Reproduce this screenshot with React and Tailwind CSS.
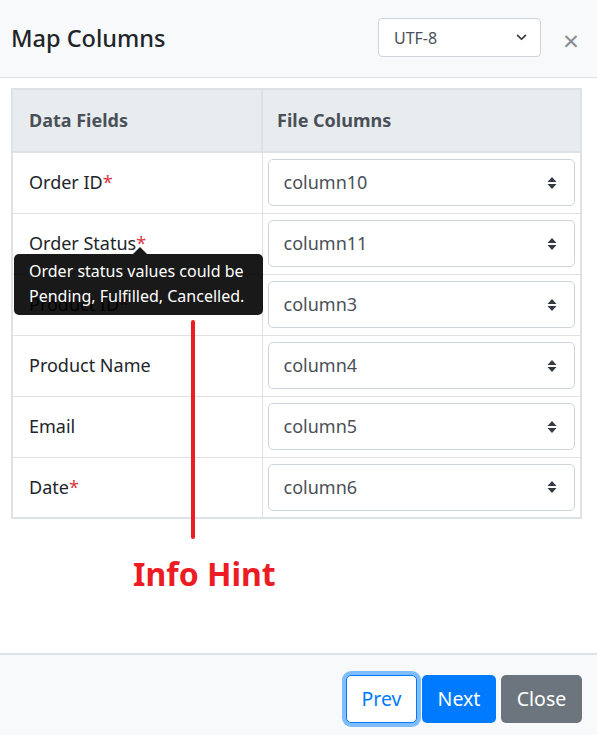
import React from "react";

const rows = [
  { label: "Order ID", required: true, value: "column10" },
  { label: "Order Status", required: true, value: "column11", hint: true },
  { label: "Product ID", required: true, value: "column3" },
  { label: "Product Name", required: false, value: "column4" },
  { label: "Email", required: false, value: "column5" },
  { label: "Date", required: true, value: "column6" },
];

function UpDown() {
  return (
    <svg width="10" height="14" viewBox="0 0 10 14" className="shrink-0">
      <path d="M5 1 L9.5 6 H0.5 Z" fill="#343a40" />
      <path d="M5 13 L9.5 8 H0.5 Z" fill="#343a40" />
    </svg>
  );
}

function Chevron() {
  return (
    <svg width="11" height="7" viewBox="0 0 12 8" className="shrink-0">
      <path d="M1.5 1.5 L6 6 L10.5 1.5" fill="none" stroke="#343a40" strokeWidth="2" strokeLinecap="round" strokeLinejoin="round" />
    </svg>
  );
}

export default function App() {
  return (
    <div className="w-[597px] h-[735px] flex flex-col bg-white text-[#212529] font-['Noto_Sans','Open_Sans',sans-serif] overflow-hidden">
      {/* HEADER */}
      <div className="h-[78px] shrink-0 flex items-center bg-[#f8f9fa] border-b border-[#dee2e6] pl-[11px] pr-[18px]">
        <h5 className="text-[23.5px] font-medium leading-none flex-1">Map Columns</h5>
        <div className="w-[163px] h-[39px] bg-white border border-[#ced4da] rounded-[4px] flex items-center justify-between pl-[15px] pr-[13px] mt-[-2px]">
          <span className="text-[16px] text-[#495057]">UTF-8</span>
          <Chevron />
        </div>
        <span className="ml-[22px] text-[28px] leading-none text-[#8a8e92] mt-[2px]">×</span>
      </div>

      {/* BODY */}
      <div className="flex-1 relative px-[11px] pt-[10px]">
        <table className="w-[571px] border-collapse border-2 border-[#dee2e6] table-fixed">
          <thead>
            <tr className="bg-[#e9ecef] h-[63px]">
              <th className="w-[250px] text-left font-bold text-[18px] text-[#495057] pl-[16px] border-2 border-[#dee2e6]">Data Fields</th>
              <th className="text-left font-bold text-[18px] text-[#495057] pl-[14px] border-2 border-[#dee2e6]">File Columns</th>
            </tr>
          </thead>
          <tbody>
            {rows.map((r) => (
              <tr key={r.label} className="h-[61px]">
                <td className="relative border border-[#dee2e6] pl-[16px] text-[18px]">
                  {r.label}
                  {r.required && <span className="text-[#dc3545]">*</span>}
                  {r.hint && (
                    <div className="absolute left-[1px] top-[40px] z-10 w-[249px] h-[61px] bg-black/90 rounded-[5px] text-white text-[16px] leading-[25px] flex flex-col justify-center pl-[15px]">
                      <div className="absolute top-[-7px] left-[119px] w-0 h-0 border-l-[7px] border-r-[7px] border-b-[7px] border-l-transparent border-r-transparent border-b-black/90" />
                      <span>Order status values could be</span>
                      <span>Pending, Fulfilled, Cancelled.</span>
                    </div>
                  )}
                </td>
                <td className="border border-[#dee2e6] px-[5px]">
                  <div className="h-[47px] border border-[#ced4da] rounded-[5px] flex items-center justify-between pl-[15px] pr-[17px] bg-white">
                    <span className="text-[18px] text-[#495057]">{r.value}</span>
                    <UpDown />
                  </div>
                </td>
              </tr>
            ))}
          </tbody>
        </table>

        {/* annotation */}
        <div className="absolute left-[191px] top-[242px] w-[4px] h-[219px] bg-[#ed1c24] rounded-full z-20" />
        <div className="absolute left-[133px] top-[480px] text-[32px] font-bold text-[#ed1c24] leading-none">Info Hint</div>
      </div>

      {/* FOOTER */}
      <div className="h-[82px] shrink-0 bg-[#f8f9fa] border-t-2 border-[#dee2e6] flex items-center justify-end gap-[5px] pr-[15px] pt-[8px]">
        <button className="h-[48px] w-[71px] rounded-[5px] bg-white border border-[#007bff] text-[#007bff] text-[19.5px] ring-4 ring-[#80bdff]">Prev</button>
        <button className="h-[48px] w-[74px] rounded-[5px] bg-[#007bff] text-white text-[19.5px]">Next</button>
        <button className="h-[48px] w-[81px] rounded-[5px] bg-[#6c757d] text-white text-[19.5px]">Close</button>
      </div>
    </div>
  );
}
